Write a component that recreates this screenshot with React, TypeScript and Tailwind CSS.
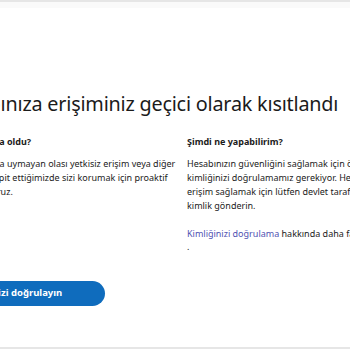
const App = () => {
  return (
    <div
      className="w-[350px] h-[350px] overflow-hidden bg-white text-[#1b1b1b] flex flex-col"
      style={{ fontFamily: '"Noto Sans", "Open Sans", sans-serif' }}
    >
      <div className="h-[2px] bg-[#e6e6e6] shrink-0" />
      <div className="h-[6px] bg-[#fafafa] shrink-0" />
      <div className="flex-1 ml-[-57px] w-[470px] flex flex-col">
        <h1 className="mt-[84px] text-[19.8px] leading-[24px] whitespace-nowrap tracking-[-0.2px]">
          Hesabınıza erişiminiz geçici olarak kısıtlandı
        </h1>
        <div className="grid grid-cols-[244px_1fr] mt-[19px] text-[9px] leading-[14px]">
          <div className="flex flex-col ml-[5px]">
            <h2 className="font-bold whitespace-nowrap">Ne kısıtlama oldu?</h2>
            <p className="mt-[8px] whitespace-nowrap">
              Koşullarımıza uymayan olası yetkisiz erişim veya diğer
              <br />
              işlemleri tespit ettiğimizde sizi korumak için proaktif
              <br />
              önlem alıyoruz.
            </p>
          </div>
          <div className="flex flex-col">
            <h2 className="font-bold whitespace-nowrap">Şimdi ne yapabilirim?</h2>
            <p className="mt-[8px] whitespace-nowrap">
              Hesabınızın güvenliğini sağlamak için önce
              <br />
              kimliğinizi doğrulamamız gerekiyor. Hesabınıza
              <br />
              erişim sağlamak için lütfen devlet tarafından verilmiş bir
              <br />
              kimlik gönderin.
            </p>
            <p className="mt-[14px] leading-[13px] whitespace-nowrap">
              <a className="text-[#4f52b2]">Kimliğinizi doğrulama</a> hakkında daha fazla bilgi edinin
              <br />.
            </p>
          </div>
        </div>
        <div className="mt-[25px]">
          <button className="h-[25px] w-[162px] pl-[16px] text-left rounded-full bg-[#0f6cbd] text-white text-[9.5px] font-bold whitespace-nowrap">
            Kimliğinizi doğrulayın
          </button>
        </div>
      </div>
      <div className="h-[2px] bg-[#e6e6e6] shrink-0 mb-[1px]" />
    </div>
  );
};

export default App;
